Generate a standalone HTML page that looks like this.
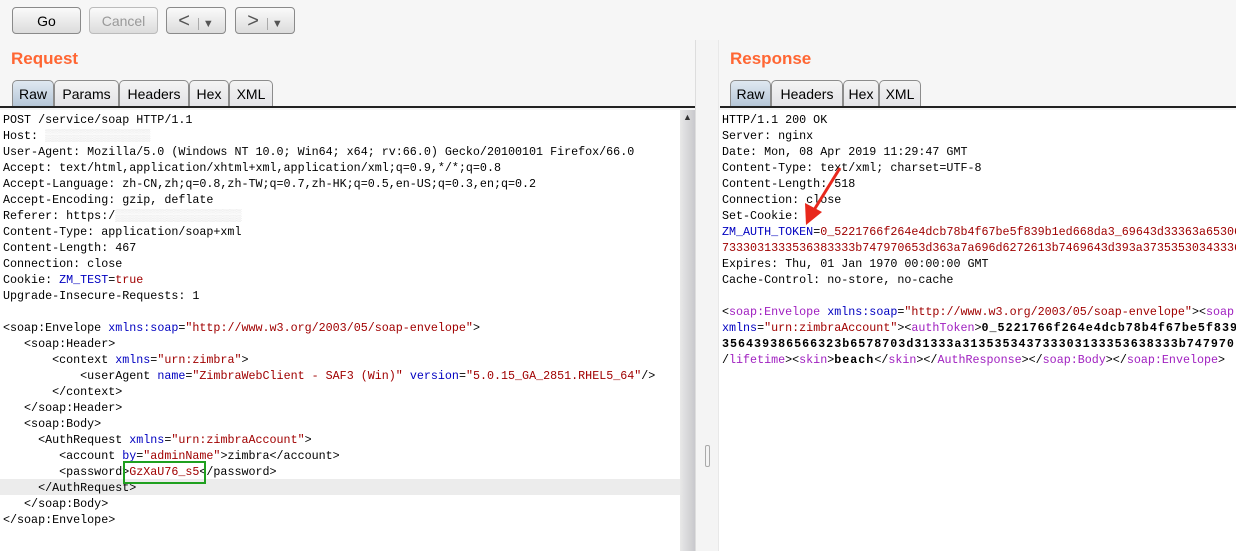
<!DOCTYPE html>
<html><head><meta charset="utf-8"><style>
body{margin:0;width:1236px;height:551px;background:#fff;overflow:hidden;position:relative;font-family:"Liberation Sans",sans-serif}
.top{position:absolute;left:0;top:0;width:1236px;height:110px;background:#f6f6f6}
.btn{position:absolute;top:7px;height:27px;border:1px solid #8a8a8a;border-radius:4px;background:linear-gradient(#fafafa,#dcdcdc);font-size:14px;text-align:center;line-height:27px;box-sizing:border-box;color:#000}
.title{position:absolute;top:49px;color:#ff6633;font-weight:bold;font-size:17px}
.tab{position:absolute;top:80px;height:27px;border:1px solid #8c8c8c;border-bottom:none;border-radius:5px 5px 0 0;background:linear-gradient(#f4f4f4,#e2e2e6);font-size:14px;line-height:26px;text-align:center;box-sizing:border-box}
.tab.sel{background:linear-gradient(#dfe8f1,#b4c5d6)}
.line{position:absolute;top:106px;height:2px;background:#222}
pre{position:absolute;margin:0;font-family:"Liberation Mono",monospace;font-size:11.7px;line-height:16px;color:#000;overflow:hidden;white-space:pre}
.b{color:#0000c0}.r{color:#a00000}.p{color:#a020c0}.k{font-weight:bold;letter-spacing:1px}
</style></head><body>
<div class="top"></div>
<div class="btn" style="left:12px;width:69px">Go</div>
<div class="btn" style="left:89px;width:69px;color:#999;border-color:#bbb">Cancel</div>
<div class="btn" style="left:166px;width:60px;font-size:20px;color:#555">&lt;<span style="font-size:11px;margin-left:8px;border-left:1px solid #aaa;padding-left:4px">▼</span></div>
<div class="btn" style="left:235px;width:60px;font-size:20px;color:#555">&gt;<span style="font-size:11px;margin-left:8px;border-left:1px solid #aaa;padding-left:4px">▼</span></div>
<div class="title" style="left:11px">Request</div>
<div class="title" style="left:730px">Response</div>
<div class="tab sel" style="left:12px;width:42px">Raw</div>
<div class="tab" style="left:54px;width:65px">Params</div>
<div class="tab" style="left:119px;width:70px">Headers</div>
<div class="tab" style="left:189px;width:40px">Hex</div>
<div class="tab" style="left:229px;width:44px">XML</div>
<div class="tab sel" style="left:730px;width:41px">Raw</div>
<div class="tab" style="left:771px;width:72px">Headers</div>
<div class="tab" style="left:843px;width:36px">Hex</div>
<div class="tab" style="left:879px;width:42px">XML</div>
<div class="line" style="left:0;width:696px"></div>
<div class="line" style="left:720px;width:516px"></div>
<div style="position:absolute;left:695px;top:40px;width:24px;height:511px;background:#f4f4f4;border-left:1px solid #ddd;border-right:1px solid #e8e8e8;box-sizing:border-box"></div>
<div style="position:absolute;left:705px;top:445px;width:3px;height:20px;border:1px solid #aaa;border-radius:2px"></div>
<div style="position:absolute;left:680px;top:110px;width:15px;height:441px;background:linear-gradient(90deg,#e8e8e8,#c8c8cc)"></div>
<div style="position:absolute;left:683px;top:112px;font-size:9px;color:#333">▲</div>
<div style="position:absolute;left:0;top:479px;width:680px;height:16px;background:#ececec"></div>
<pre style="left:3px;top:112px;width:677px;height:439px">POST /service/soap HTTP/1.1
Host: <span style="color:#ddd">▒▒▒▒▒▒▒▒▒▒▒▒▒▒▒</span>
User-Agent: Mozilla/5.0 (Windows NT 10.0; Win64; x64; rv:66.0) Gecko/20100101 Firefox/66.0
Accept: text/html,application/xhtml+xml,application/xml;q=0.9,*/*;q=0.8
Accept-Language: zh-CN,zh;q=0.8,zh-TW;q=0.7,zh-HK;q=0.5,en-US;q=0.3,en;q=0.2
Accept-Encoding: gzip, deflate
Referer: https:/<span style="color:#ddd">▒▒▒▒▒▒▒▒▒▒▒▒▒▒▒▒▒▒</span>
Content-Type: application/soap+xml
Content-Length: 467
Connection: close
Cookie: <span class="b">ZM_TEST</span>=<span class="r">true</span>
Upgrade-Insecure-Requests: 1

&lt;soap:Envelope <span class="b">xmlns:soap</span>=<span class="r">"http://www.w3.org/2003/05/soap-envelope"</span>&gt;
   &lt;soap:Header&gt;
       &lt;context <span class="b">xmlns</span>=<span class="r">"urn:zimbra"</span>&gt;
           &lt;userAgent <span class="b">name</span>=<span class="r">"ZimbraWebClient - SAF3 (Win)"</span> <span class="b">version</span>=<span class="r">"5.0.15_GA_2851.RHEL5_64"</span>/&gt;
       &lt;/context&gt;
   &lt;/soap:Header&gt;
   &lt;soap:Body&gt;
     &lt;AuthRequest <span class="b">xmlns</span>=<span class="r">"urn:zimbraAccount"</span>&gt;
        &lt;account <span class="b">by</span>=<span class="r">"adminName"</span>&gt;zimbra&lt;/account&gt;
        &lt;password&gt;<span class="r">GzXaU76_s5</span>&lt;/password&gt;
     &lt;/AuthRequest&gt;
   &lt;/soap:Body&gt;
&lt;/soap:Envelope&gt;</pre>
<div style="position:absolute;left:123px;top:461px;width:83px;height:23px;border:2px solid #1fa01f;box-sizing:border-box"></div>
<pre style="left:722px;top:112px;width:514px;height:439px">HTTP/1.1 200 OK
Server: nginx
Date: Mon, 08 Apr 2019 11:29:47 GMT
Content-Type: text/xml; charset=UTF-8
Content-Length: 518
Connection: close
Set-Cookie:
<span class="b">ZM_AUTH_TOKEN</span>=<span class="r">0_5221766f264e4dcb78b4f67be5f839b1ed668da3_69643d33363a65306</span>
<span class="r">7333031333536383333b747970653d363a7a696d6272613b7469643d393a37353530343336</span>
Expires: Thu, 01 Jan 1970 00:00:00 GMT
Cache-Control: no-store, no-cache

&lt;<span class="p">soap:Envelope</span> <span class="b">xmlns:soap</span>=<span class="r">"http://www.w3.org/2003/05/soap-envelope"</span>&gt;&lt;<span class="p">soap</span>
<span class="b">xmlns</span>=<span class="r">"urn:zimbraAccount"</span>&gt;&lt;<span class="p">authToken</span>&gt;<span class="k">0_5221766f264e4dcb78b4f67be5f839</span>
<span class="k">356439386566323b6578703d31333a313535343733303133353638333b747970</span>
/<span class="p">lifetime</span>&gt;&lt;<span class="p">skin</span>&gt;<span class="k">beach</span>&lt;/<span class="p">skin</span>&gt;&lt;/<span class="p">AuthResponse</span>&gt;&lt;/<span class="p">soap:Body</span>&gt;&lt;/<span class="p">soap:Envelope</span>&gt;</pre>
<svg style="position:absolute;left:800px;top:165px" width="45" height="65"><line x1="40" y1="3" x2="14" y2="45" stroke="#e8281c" stroke-width="3"/><polygon points="6,60 5,38 22,47" fill="#e8281c"/></svg>
</body></html>
